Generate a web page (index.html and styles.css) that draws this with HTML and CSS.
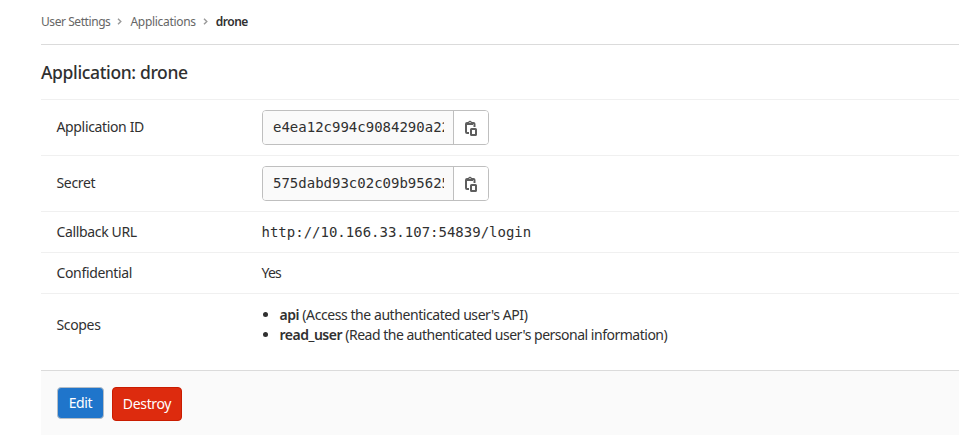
FILE: index.html
```html
<!DOCTYPE html>
<html lang="en">
<head>
<meta charset="utf-8">
<title>Application: drone</title>
<link rel="stylesheet" href="styles.css">
</head>
<body>
<main class="page">
  <nav class="breadcrumbs">
    <span class="crumb first">User Settings</span>
    <svg class="chevron" viewBox="0 0 5 7"><path d="M1 .7 3.8 3.5 1 6.3"/></svg>
    <span class="crumb second">Applications</span>
    <svg class="chevron" viewBox="0 0 5 7"><path d="M1 .7 3.8 3.5 1 6.3"/></svg>
    <span class="crumb current">drone</span>
  </nav>
  <h1 class="title">Application: drone</h1>
  <div class="row tall">
    <div class="label">Application ID</div>
    <div class="group">
      <div class="field"><span>e4ea12c994c9084290a22</span></div>
      <button class="copy" aria-label="Copy ID"><svg viewBox="0 0 12 16"><path class="fill" fill-rule="evenodd" d="M2 5V2h1.200a2 2 0 0 1 3.600 0H8v3ZM4.500 2v1h1V2Z"/><path d="M3 3H2a1 1 0 0 0-1 1v8a1 1 0 0 0 1 1h2M7 3h1.500a1 1 0 0 1 1 1v3"/><rect x="6" y="9" width="5" height="6" rx=".5"/></svg></button>
    </div>
  </div>
  <div class="row tall">
    <div class="label">Secret</div>
    <div class="group">
      <div class="field"><span>575dabd93c02c09b95625</span></div>
      <button class="copy" aria-label="Copy secret"><svg viewBox="0 0 12 16"><path class="fill" fill-rule="evenodd" d="M2 5V2h1.200a2 2 0 0 1 3.600 0H8v3ZM4.500 2v1h1V2Z"/><path d="M3 3H2a1 1 0 0 0-1 1v8a1 1 0 0 0 1 1h2M7 3h1.500a1 1 0 0 1 1 1v3"/><rect x="6" y="9" width="5" height="6" rx=".5"/></svg></button>
    </div>
  </div>
  <div class="row short">
    <div class="label">Callback URL</div>
    <div class="mono">http://10.166.33.107:54839/login</div>
  </div>
  <div class="row short">
    <div class="label">Confidential</div>
    <div class="yes">Yes</div>
  </div>
  <div class="row scopes">
    <div class="label">Scopes</div>
    <ul>
      <li class="scope-api"><strong>api</strong> (Access the authenticated user's API)</li>
      <li><strong>read_user</strong> (Read the authenticated user's personal information)</li>
    </ul>
  </div>
  <footer class="actions">
    <button class="btn edit">Edit</button>
    <button class="btn destroy">Destroy</button>
  </footer>
</main>
</body>
</html>
```
FILE: styles.css
```css
* { box-sizing: border-box; }
body { margin: 0; background: #fff; color: #303030; font: 14px/20px "Noto Sans", "Open Sans", sans-serif; overflow: hidden; }
.page { margin-left: 41px; height: 435px; display: flex; flex-direction: column; }
.breadcrumbs { height: 45px; flex: none; display: flex; align-items: center; border-bottom: 1px solid #dbdbdb; font-size: 12px; color: #666; white-space: nowrap; letter-spacing: -.3px; }
.first { letter-spacing: -.43px; }
.chevron { width: 5px; height: 7px; fill: none; stroke: #999; stroke-width: 1.4; margin: 0 8px 1px 7px; }
.current { color: #303030; font-weight: 600; letter-spacing: -.5px; }
.title { margin: 0; height: 54px; flex: none; font-size: 17.5px; font-weight: 500; line-height: 54px; letter-spacing: -.36px; }
.row { flex: none; display: flex; align-items: center; border-top: 1px solid #f0f0f0; padding-left: 15.5px; letter-spacing: -.35px; }
.tall { height: 56px; }
.tall .label { padding-bottom: 2px; }
.short { height: 41px; }
.scopes { height: 77px; padding-bottom: 15px; }
.label { width: 205px; flex: none; }
.tall .group { margin-left: .5px; }
.yes { letter-spacing: -.8px; }
.group { display: flex; width: 227px; height: 35px; border: 1px solid #bfbfbf; border-radius: 4px; overflow: hidden; }
.field { width: 190px; flex: none; padding: 0 9px 0 10px; background: #fafafa; font: 14px/33px "DejaVu Sans Mono", monospace; letter-spacing: 0; }
.field span { display: block; overflow: hidden; white-space: nowrap; }
.copy { flex: 1; display: flex; align-items: center; justify-content: center; padding: 0; border: 0; border-left: 1px solid #bfbfbf; background: #fff; }
.copy svg { width: 12px; height: 16px; fill: none; stroke: #5e5e5e; stroke-width: 2; }
.copy .fill { fill: #5e5e5e; stroke: none; }
.mono { font-family: "DejaVu Sans Mono", monospace; letter-spacing: 0; }
ul { margin: 0; padding: 0 0 0 18px; letter-spacing: -.49px; }
.scope-api { letter-spacing: -.43px; }
strong { font-weight: 600; }
.actions { flex: 1; display: flex; align-items: flex-start; gap: 8px; padding: 16px; background: #fafafa; border-top: 1px solid #dbdbdb; }
.btn { font: 14px/20px "Noto Sans", "Open Sans", sans-serif; color: #fff; border-radius: 4px; padding: 0; letter-spacing: -.35px; }
.edit { width: 47px; height: 32px; background: #1f75cb; border: 1px solid #b5bdc5; }
.destroy { width: 70px; height: 34px; background: #dd2b0e; border: 1px solid #c91c00; }
```
